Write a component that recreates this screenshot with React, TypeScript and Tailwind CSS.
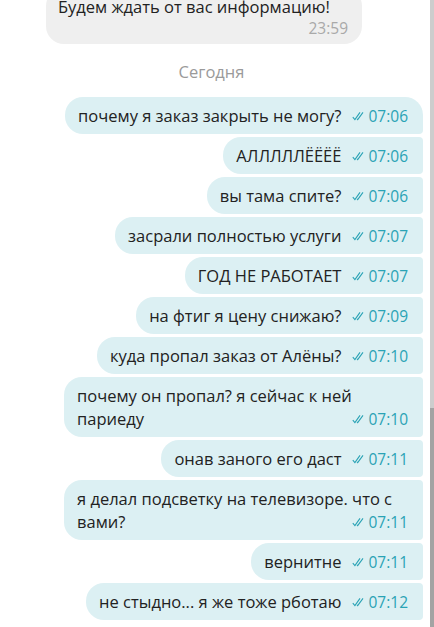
import React from 'react';

type Msg = { text: string; time: string };

const messages: Msg[] = [
  { text: 'почему я заказ закрыть не могу?', time: '07:06' },
  { text: 'АЛЛЛЛЛЁЁЁЁ', time: '07:06' },
  { text: 'вы тама спите?', time: '07:06' },
  { text: 'засрали полностью услуги', time: '07:07' },
  { text: 'ГОД НЕ РАБОТАЕТ', time: '07:07' },
  { text: 'на фтиг я цену снижаю?', time: '07:09' },
  { text: 'куда пропал заказ от Алёны?', time: '07:10' },
  { text: 'почему он пропал? я сейчас к ней париеду', time: '07:10' },
  { text: 'онав заного его даст', time: '07:11' },
  { text: 'я делал подсветку на телевизоре. что с вами?', time: '07:11' },
  { text: 'вернитне', time: '07:11' },
  { text: 'не стыдно... я же тоже рботаю', time: '07:12' },
];

const DoubleCheck = () => (
  <svg className="w-[13px] h-[10px] mr-[3px]" viewBox="0 0 13 10" fill="none" stroke="currentColor" strokeWidth={1.1}>
    <path d="M0.8 6.2 L2.9 8.6 L8 1.4" />
    <path d="M5 7.8 L5.7 8.6 L11 1.4" />
  </svg>
);

const OutBubble = ({ msg, first }: { msg: Msg; first: boolean }) => (
  <div
    className={`w-fit max-w-[359px] bg-[#dcf0f3] text-[#222] pl-[13px] pr-[15px] py-[7px] rounded-[18px] rounded-br-[4px] ${
      first ? '' : 'rounded-tr-[4px]'
    }`}
  >
    <span>{msg.text}</span>
    <span className="float-right flex items-center ml-[11px] mt-[2px] text-[15.5px] leading-[20px] text-[#2aa3b5]">
      <DoubleCheck />
      {msg.time}
    </span>
  </div>
);

export default function App() {
  return (
    <div
      className="h-[627px] w-[434px] overflow-hidden bg-white flex"
      style={{ fontFamily: '"Open Sans", "Noto Sans", sans-serif' }}
    >
      <div className="flex-1 flex flex-col pr-[7px] -mt-[12px] text-[16.5px] leading-[23px]">
        <div className="pl-[46px]">
          <div className="w-[316px] bg-[#efefef] text-[#222] rounded-[18px] pl-3 pr-[14px] pt-[7px] pb-[6px]">
            <div>Будем ждать от вас информацию!</div>
            <div className="text-right text-[15.5px] leading-[20px] text-[#a9a9a9]">23:59</div>
          </div>
        </div>

        <div className="text-center text-[#9a9a9a] mt-[16px] mb-[14px]">Сегодня</div>

        <div className="flex flex-col items-end gap-[3px]">
          {messages.map((m, i) => (
            <OutBubble key={i} msg={m} first={i === 0} />
          ))}
        </div>
      </div>

      <div className="w-[4px] flex flex-col bg-[#cdcdcd]">
        <div className="h-[408px]" />
        <div className="flex-1 bg-[#a3a3a3]" />
      </div>
    </div>
  );
}
